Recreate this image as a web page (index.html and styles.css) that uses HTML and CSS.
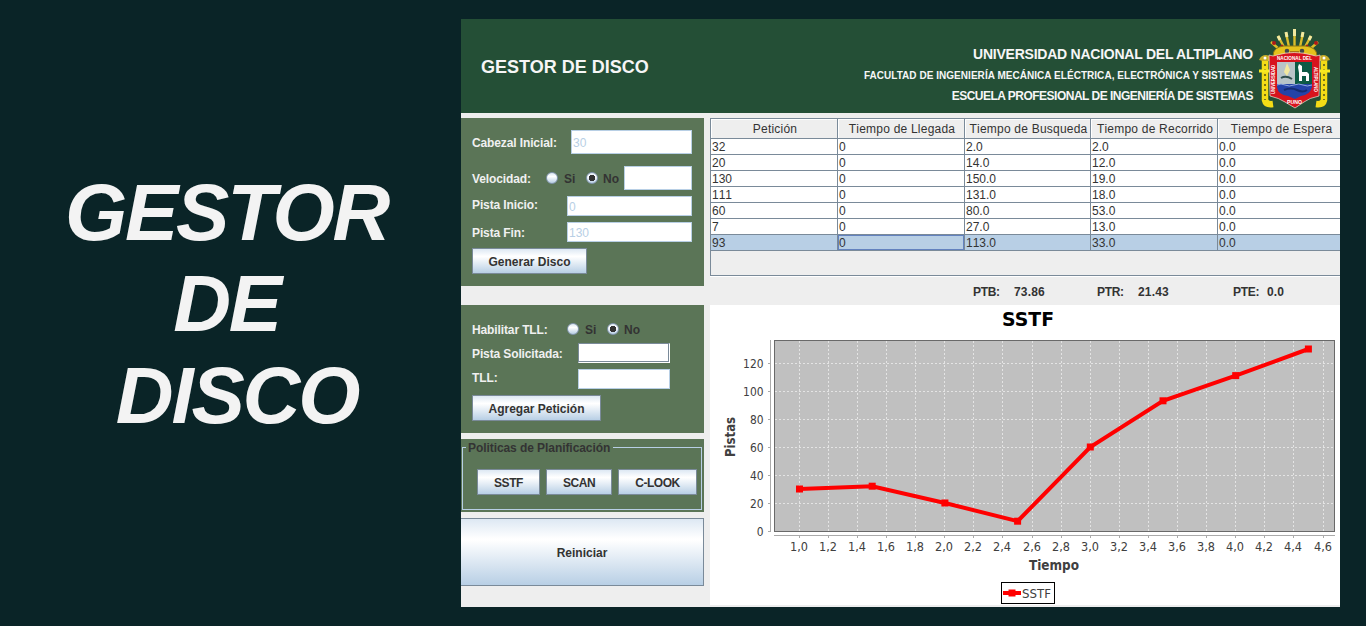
FILE: index.html
```html
<!DOCTYPE html>
<html lang="es">
<head>
<meta charset="utf-8">
<title>Gestor de Disco</title>
<link rel="stylesheet" href="styles.css">
</head>
<body>
<div class="page">
  <h1 class="hero"><span>GESTOR</span><span>DE</span><span class="hero-last">DISCO</span></h1>
  <main class="window">
    <header class="banner">
      <div class="banner-title">GESTOR DE DISCO</div>
      <div class="school">
        <div class="school-a">UNIVERSIDAD NACIONAL DEL ALTIPLANO</div>
        <div class="school-b">FACULTAD DE INGENIERÍA MECÁNICA ELÉCTRICA, ELECTRÓNICA Y SISTEMAS</div>
        <div class="school-c">ESCUELA PROFESIONAL DE INGENIERÍA DE SISTEMAS</div>
      </div>
      <svg class="crest" width="72" height="80" viewBox="0 0 72 80">
        <g stroke="#d9bd2b" stroke-width="2.400" fill="none">
          <path d="M35.500 18V1M30 18L27 4M41 18L44 4M25 18L19 7M46 18L52 7M21 21L12 13M50 21L59 13"/>
        </g>
        <g stroke="#f3e9a0" stroke-width="3"><path d="M35.500 7V0M28 8L27 3M43 8L44 3M21 11L19 7M50 11L52 7"/></g>
        <g fill="#b01818"><circle cx="15" cy="14" r="2"/><circle cx="57" cy="14" r="2"/><circle cx="23" cy="17" r="1.500"/><circle cx="48" cy="17" r="1.500"/></g>
        <path d="M14 27Q14 18 25 17H46Q58 18 58 27Z" fill="#e5c21c" stroke="#8b7614"/>
        <circle cx="28" cy="22" r="2.300" fill="#42484a"/><circle cx="43" cy="22" r="2.300" fill="#42484a"/><path d="M31 23H40" stroke="#a97812" stroke-width="2"/>
        <g fill="none" stroke="#f4dc16" stroke-width="6.500"><path d="M6 29V71Q7 76 14 75M65 29V71Q64 76 57 75"/></g>
        <g fill="none" stroke="#5b5a1c" stroke-width="1.600" stroke-dasharray="2 3"><path d="M6 35V71M65 35V71"/></g>
        <path d="M0 31Q2 26 7 26T12 32H4ZM71 31Q69 26 64 26T59 32H67Z" fill="#c9ae27"/>
        <circle cx="6" cy="29" r="1.500" fill="#fff"/><circle cx="65" cy="29" r="1.500" fill="#fff"/>
        <path d="M0 42H13M58 42H71" stroke="#f8e920" stroke-width="3"/>
        <path d="M10 26Q14 28 18 26Q35 21 53 26Q57 28 61 26L60 67Q50 69 45 73L36 79L26 73Q20 69 11 67Z" fill="#d7131d" stroke="#eee7d8" stroke-width=".7"/>
        <path d="M18 33H36V55H18Z" fill="#b8c4c8"/><path d="M36 33H53V55H36Z" fill="#0d5a45"/>
        <path d="M18 55H53V58Q51 66 42 67L36 70L29 67Q19 66 18 58Z" fill="#2443a8"/>
        <path d="M18 56Q22 54 26 56T35 56T44 56T53 56" stroke="#91aadd" fill="none"/><path d="M25 61Q32 58 38 61T48 61" stroke="#152c70" stroke-width="2" fill="none"/>
        <path d="M28 34L25 43L28 47L31 41Z" fill="#f2e89f"/><path d="M22 49Q27 46 33 50" stroke="#304e4d" stroke-width="2" fill="none"/>
        <path d="M40 35L43 37V43H48L50 45V52H47V47H43V52H40V44L39 38Z" fill="#fff"/>
        <text class="crest-text" x="18" y="31" textLength="35" lengthAdjust="spacingAndGlyphs">NACIONAL DEL</text>
        <text class="crest-text" transform="translate(16 65) rotate(-90)" textLength="29" lengthAdjust="spacingAndGlyphs">UNIVERSIDAD</text>
        <text class="crest-text" transform="translate(55 38) rotate(90)" textLength="25" lengthAdjust="spacingAndGlyphs">ALTIPLANO</text>
        <text class="crest-text" x="28" y="75" textLength="15" lengthAdjust="spacingAndGlyphs">PUNO</text>
      </svg>
    </header>
    <div class="body">
      <aside class="side">
        <section class="panel disk">
          <div class="row r1"><label>Cabezal Inicial:</label><div class="field f1">30</div></div>
          <div class="row r2"><label>Velocidad:</label><i class="radio"></i><b class="si">Si</b><i class="radio on"></i><b class="no">No</b><div class="field f2"></div></div>
          <div class="row r3"><label>Pista Inicio:</label><div class="field f3">0</div></div>
          <div class="row r4"><label>Pista Fin:</label><div class="field f3">130</div></div>
          <button class="btn b-disk">Generar Disco</button>
        </section>
        <section class="panel request">
          <div class="row q1"><label>Habilitar TLL:</label><i class="radio"></i><b class="si">Si</b><i class="radio on"></i><b class="no">No</b></div>
          <div class="row q2"><label>Pista Solicitada:</label><div class="field sunk"></div></div>
          <div class="row q3"><label>TLL:</label><div class="field"></div></div>
          <button class="btn b-req">Agregar Petición</button>
        </section>
        <section class="panel policy">
          <div class="group">
            <div class="legend">Politicas de Planificación</div>
            <div class="choices"><button class="btn p1">SSTF</button><button class="btn p2">SCAN</button><button class="btn p3">C-LOOK</button></div>
          </div>
        </section>
        <button class="btn restart">Reiniciar</button>
      </aside>
      <section class="main">
        <div class="table">
          <div class="tr th"><span>Petición</span><span>Tiempo de Llegada</span><span>Tiempo de Busqueda</span><span>Tiempo de Recorrido</span><span>Tiempo de Espera</span></div>
          <div class="tr"><span>32</span><span>0</span><span>2.0</span><span>2.0</span><span>0.0</span></div>
          <div class="tr"><span>20</span><span>0</span><span>14.0</span><span>12.0</span><span>0.0</span></div>
          <div class="tr"><span>130</span><span>0</span><span>150.0</span><span>19.0</span><span>0.0</span></div>
          <div class="tr"><span>111</span><span>0</span><span>131.0</span><span>18.0</span><span>0.0</span></div>
          <div class="tr"><span>60</span><span>0</span><span>80.0</span><span>53.0</span><span>0.0</span></div>
          <div class="tr"><span>7</span><span>0</span><span>27.0</span><span>13.0</span><span>0.0</span></div>
          <div class="tr selected"><span>93</span><span class="focus">0</span><span>113.0</span><span>33.0</span><span>0.0</span></div>
        </div>
        <div class="totals"><span class="key">PTB:</span><span>73.86</span><span class="key">PTR:</span><span>21.43</span><span class="key">PTE:</span><span>0.0</span></div>
        <svg class="chart" id="chart" width="630" height="300" viewBox="710 305 630 300">
          <rect x="774.500" y="340.500" width="560" height="191" fill="#c0c0c0" stroke="#696969"/>
        </svg>
      </section>
    </div>
  </main>
</div>
<script src="chart.js"></script>
</body>
</html>
```

FILE: styles.css
```css
* { box-sizing: border-box; }
body { margin: 0; background: #0a2427; font-family: "Liberation Sans", Arial, sans-serif; font-size: 12px; color: #333; }
.page { display: flex; width: 1366px; height: 626px; overflow: hidden; }
.hero { display: flex; flex-direction: column; align-items: center; width: 461px; margin: 0; padding: 167px 8px 0 0; font-size: 80px; line-height: 91.4px; font-style: italic; font-weight: bold; color: #f3f3f3; letter-spacing: -2.2px; }
.hero-last { padding-left: 21px; }
.window { width: 879px; height: 588px; margin-top: 19px; background: #eee; overflow: hidden; }
.banner { display: flex; height: 94px; background: #244f36; color: #f6f6f6; font-weight: bold; padding-left: 20px; white-space: nowrap; }
.banner-title { font-size: 18px; line-height: 22px; padding-top: 37px; width: 220px; }
.school { width: 552px; text-align: right; padding-top: 26px; }
.school-a { font-size: 14px; line-height: 19px; letter-spacing: -.24px; }
.school-b { font-size: 10px; line-height: 22px; padding-top: 1px; letter-spacing: .04px; }
.school-c { font-size: 12px; line-height: 18px; letter-spacing: -.51px; }
.crest { margin: 10px 0 0 6px; }
.crest-text { font-size: 5px; font-weight: bold; fill: #fff; }
.body { display: flex; gap: 6px; padding-top: 5px; }
.side { width: 243px; }
.panel { background: #5b7557; padding-left: 11px; }
.disk { height: 168px; padding-top: 12px; }
.request { height: 128px; margin-top: 19px; padding-top: 15px; }
.policy { height: 73px; margin-top: 6px; padding: 8px 2px 0 1px; }
.row { display: flex; align-items: center; font-weight: bold; }
.row label { color: #f0f0f0; white-space: nowrap; letter-spacing: -.12px; }
.field { background: #fff; border: 1px solid #b8cfe5; color: #b8cfe5; font-weight: normal; padding-left: 2px; height: 20px; line-height: 20px; }
.sunk { border: 1px solid #7a8a99; border-right-color: #fff; border-bottom-color: #fff; box-shadow: inset -1px -1px #7a8a99; }
.r1 label { width: 99px; padding-top: 1px; }
.f1 { width: 121px; height: 24px; line-height: 24px; padding-left: 1px; }
.r2 { margin-top: 12px; }
.r2 label { width: 74px; padding-top: 1px; }
.f2 { width: 68px; height: 24px; }
.radio { width: 12px; height: 12px; border-radius: 50%; border: 1px solid #8295ad; background: linear-gradient(#dde8f3, #fff 35%, #b8cfe5); flex: none; }
.radio.on { background: radial-gradient(circle, #333 0 3px, transparent 3.5px), linear-gradient(#dde8f3, #fff 35%, #b8cfe5); }
.si { width: 22px; margin-left: 6px; padding-top: 1px; }
.no { width: 21px; margin-left: 5px; padding-top: 1px; }
.r3, .r4 { margin-top: 6px; }
.r3 label, .r4 label { width: 95px; }
.r3 label { padding-bottom: 2px; }
.r4 label { padding-top: 2px; }
.f3 { width: 125px; padding-left: 1px; }
.btn { display: block; height: 26px; padding: 1px 0 0; border: 1px solid #7a8a99; border-radius: 0; background: linear-gradient(#dde8f3, #fff 30%, #fff 32%, #b8cfe5); color: #333; font: bold 12px "Liberation Sans", Arial, sans-serif; }
.b-disk { width: 115px; margin-top: 6px; }
.q1 { height: 18px; }
.q1 label { width: 95px; padding-top: 1px; }
.q2 { margin-top: 5px; }
.q3 { margin-top: 6px; }
.q2 label, .q3 label { width: 106px; }
.q2 label { padding-top: 1px; }
.q3 label { padding-bottom: 2px; }
.q2 .field, .q3 .field { width: 92px; }
.b-req { width: 129px; margin-top: 6px; }
.group { height: 63px; border: 1px solid #b8cfe5; }
.legend { width: 147px; height: 15px; line-height: 16px; margin: -8px 0 0 3px; padding-left: 2px; background: #5b7557; font-weight: bold; white-space: nowrap; letter-spacing: -.07px; }
.choices { display: flex; gap: 6px; padding: 14px 0 0 14px; letter-spacing: -.5px; }
.choices .btn { letter-spacing: -.45px; flex: none; }
.p1 { width: 63px; } .p2 { width: 66px; } .p3 { width: 79px; }
.restart { width: 244px; height: 68px; margin: 6px 0 0 -1px; padding-top: 2px; }
.main { width: 630px; }
.table { height: 158px; border: 1px solid #7a8a99; border-right: 0; box-shadow: 0 1px #fff; font-kerning: none; }
.tr { display: grid; grid-template-columns: 127px 127px 126px 127px 126px; grid-template-rows: 100%; height: 16px; width: 629px; overflow: hidden; background: #fff; }
.tr span { border-right: 1px solid #7a8a99; border-bottom: 1px solid #7a8a99; padding-left: 1px; line-height: 16px; white-space: nowrap; }
.tr.th { height: 20px; background: #eee; }
.th span { line-height: 21px; text-align: center; padding-left: 2px; box-shadow: inset 1px 1px #fff; letter-spacing: .22px; }
.tr.selected { background: #b8cfe5; }
.tr .focus { box-shadow: inset 0 0 0 1px #6382bf; }
.totals { display: grid; grid-template-columns: 41px 83px 41px 95px 34px 60px; padding-left: 263px; height: 29px; line-height: 33px; font-weight: bold; letter-spacing: .15px; }
.key { letter-spacing: -.3px; }
.chart { display: block; background: #fff; font-family: "DejaVu Sans", sans-serif; }
.tick { font-size: 12px; fill: #404040; }
.axis-title { font-size: 14px; font-weight: bold; fill: #404040; }
.chart-title { font-size: 20px; font-weight: bold; fill: #000; }
```

FILE: chart.js
```javascript
const svg = document.getElementById("chart");

function add(tag, attrs, text) {
  const el = document.createElementNS("http://www.w3.org/2000/svg", tag);
  for (const key in attrs) el.setAttribute(key, attrs[key]);
  if (text) el.textContent = text;
  svg.appendChild(el);
}

function label(text, x, y, width, cls, extra) {
  add("text", Object.assign({ x, y, class: cls, textLength: width, lengthAdjust: "spacingAndGlyphs" }, extra), text);
}

function line(x1, y1, x2, y2, stroke, dash) {
  add("path", { d: `M${x1} ${y1}L${x2} ${y2}`, stroke, "stroke-dasharray": dash || "none" });
}

for (let i = 0; i < 19; i++) {
  const x = Math.floor(799.2 + i * 29.1) + 0.5;
  line(x, 341, x, 531, "#e4e4e4", "2 2");
  line(x, 536, x, 538, "#aaa");
  label((1 + i * 0.2).toFixed(1).replace(".", ","), x - 9.5, 551, 18, "tick");
}
for (let v = 0; v <= 120; v += 20) {
  const y = 531.5 - v * 1.4;
  if (v) line(775, y, 1334, y, "#e4e4e4", "2 2");
  line(768, y, 770, y, "#aaa");
  const w = String(v).length * 6.8;
  label(String(v), 763.5 - w, y + 4.5, w, "tick");
}
line(770.5, 340, 770.5, 532, "#aaa");
line(774, 535.5, 1335, 535.5, "#aaa");

const points = [[1, 30], [1.5, 32], [2, 20], [2.5, 7], [3, 60], [3.5, 93], [4, 111], [4.5, 130]]
  .map(([t, p]) => [799.5 + (t - 1) * 145.4, 531 - p * 1.4]);
add("polyline", { points: points.join(" "), fill: "none", stroke: "#f00", "stroke-width": 4 });
for (const [x, y] of points) add("rect", { x: x - 3.5, y: y - 3.5, width: 7, height: 7, fill: "#f00" });

label("SSTF", 1002, 325.5, 52, "chart-title");
label("Tiempo", 1029, 570, 50, "axis-title");
label("Pistas", 0, 0, 40, "axis-title", { transform: "translate(735 457) rotate(-90)" });
add("rect", { x: 1001.5, y: 582.5, width: 53, height: 21, fill: "#fff", stroke: "#000" });
add("path", { d: "M1003 593H1021", stroke: "#f00", "stroke-width": 4 });
add("rect", { x: 1008.5, y: 589.5, width: 7, height: 7, fill: "#f00" });
label("SSTF", 1022, 598, 29, "tick");
```
